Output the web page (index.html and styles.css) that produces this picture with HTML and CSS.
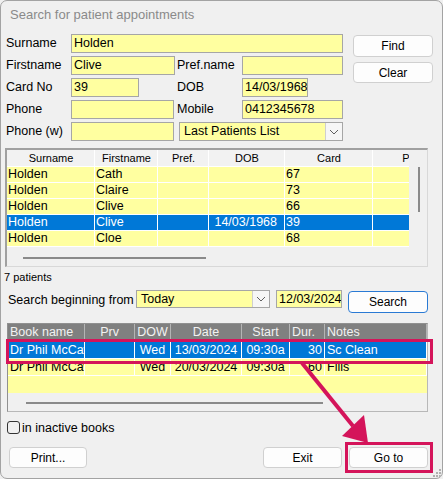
FILE: index.html
```html
<!DOCTYPE html>
<html>
<head>
<meta charset="utf-8">
<link rel="stylesheet" href="styles.css">
</head>
<body>
<div class="window">
  <div class="title">Search for patient appointments</div>

  <div class="form">
    <div class="fields">
      <span class="lbl">Surname</span><div class="field span3">Holden</div>
      <span class="lbl">Firstname</span><div class="field w104">Clive</div><span class="lbl">Pref.name</span><div class="field"></div>
      <span class="lbl">Card No</span><div class="field w68">39</div><span class="lbl">DOB</span><div class="field w66">14/03/1968</div>
      <span class="lbl">Phone</span><div class="field w103"></div><span class="lbl">Mobile</span><div class="field">0412345678</div>
      <span class="lbl">Phone (w)</span><div class="field w103"></div>
      <div class="field combo span2 shift">Last Patients List<span class="drop"><svg width="10" height="6" viewBox="0 0 10 6"><polyline points="1,1 5,5 9,1" fill="none" stroke="#606060" stroke-width="1"/></svg></span></div>
    </div>
    <div class="side-btns">
      <button class="btn find">Find</button>
      <button class="btn clear">Clear</button>
    </div>
  </div>

  <div class="plist">
    <div class="pgrid">
      <div class="prow phead"><span>Surname</span><span>Firstname</span><span>Pref.</span><span>DOB</span><span>Card</span><span>P</span></div>
      <div class="prow"><span>Holden</span><span>Cath</span><span></span><span class="r"></span><span>67</span><span></span></div>
      <div class="prow"><span>Holden</span><span>Claire</span><span></span><span class="r"></span><span>73</span><span></span></div>
      <div class="prow"><span>Holden</span><span>Clive</span><span></span><span class="r"></span><span>66</span><span></span></div>
      <div class="prow sel"><span>Holden</span><span>Clive</span><span></span><span class="r">14/03/1968</span><span>39</span><span></span></div>
      <div class="prow"><span>Holden</span><span>Cloe</span><span></span><span class="r"></span><span>68</span><span></span></div>
      <div class="hscroll"><div class="hthumb"></div></div>
    </div>
    <div class="vscroll"><div class="vthumb"></div></div>
  </div>

  <div class="count">7 patients</div>

  <div class="search-row">
    <span class="slabel">Search beginning from</span>
    <div class="field combo today">Today<span class="drop"><svg width="10" height="6" viewBox="0 0 10 6"><polyline points="1,1 5,5 9,1" fill="none" stroke="#606060" stroke-width="1"/></svg></span></div>
    <div class="field sdate">12/03/2024</div>
    <button class="btn search">Search</button>
  </div>

  <div class="appts">
    <div class="arow ahead"><span class="l">Book name</span><span>Prv</span><span>DOW</span><span>Date</span><span>Start</span><span class="l">Dur.</span><span class="l">Notes</span></div>
    <div class="arow sel"><span class="l">Dr Phil McCaw</span><span></span><span>Wed</span><span>13/03/2024</span><span>09:30a</span><span class="r">30</span><span class="l">Sc Clean</span></div>
    <div class="arow"><span class="l">Dr Phil McCaw</span><span></span><span>Wed</span><span>20/03/2024</span><span>09:30a</span><span class="r">60</span><span class="l">Fills</span></div>
    <div class="arow empty"></div>
    <div class="ascroll"><div class="athumb"></div></div>
  </div>

  <label class="check"><span class="box"></span>in inactive books</label>

  <div class="bottom">
    <button class="btn print">Print...</button>
    <button class="btn exit">Exit</button>
    <button class="btn goto">Go to</button>
  </div>

  <svg class="overlay" width="443" height="479" viewBox="0 0 443 479">
    <rect x="7.5" y="340.5" width="424" height="22" fill="none" stroke="#d4145a" stroke-width="3"/>
    <rect x="346.5" y="443.5" width="85" height="28" fill="none" stroke="#d4145a" stroke-width="3"/>
    <line x1="302" y1="363" x2="353" y2="426" stroke="#d4145a" stroke-width="4"/>
    <polygon points="342,436 364,415 368,443" fill="#d4145a"/>
    <g fill="#b0b0b0">
      <rect x="439" y="469" width="2" height="2"/>
      <rect x="436" y="472" width="2" height="2"/>
      <rect x="439" y="472" width="2" height="2"/>
      <rect x="433" y="475" width="2" height="2"/>
      <rect x="436" y="475" width="2" height="2"/>
      <rect x="439" y="475" width="2" height="2"/>
    </g>
  </svg>
</div>
</body>
</html>
```

FILE: styles.css
```css
* { box-sizing: border-box; }

html, body {
  margin: 0;
  padding: 0;
  background: #f0f0f0;
}

body {
  font-family: "Liberation Sans", Arial, sans-serif;
  font-size: 12.5px;
  color: #000;
}

.window {
  position: relative;
  width: 443px;
  height: 479px;
  border: 1px solid #a3a3a3;
  border-radius: 7px;
  background: #f0f0f0;
  overflow: hidden;
}

.title {
  height: 32px;
  padding: 6px 0 0 9px;
  line-height: 16px;
  font-size: 13px;
  color: #8a8a8a;
}

/* ---------- top form ---------- */
.form {
  display: flex;
  margin-left: 5px;
}

.fields {
  display: grid;
  grid-template-columns: 65px 106px 65px 101px;
  grid-template-rows: repeat(5, 19px);
  row-gap: 3px;
  padding-top: 1px;
  align-items: center;
}

.lbl {
  line-height: 19px;
  white-space: nowrap;
}

.field {
  height: 19px;
  background: #ffffa0;
  border: 1px solid #a6a6a6;
  padding-left: 2px;
  line-height: 17px;
  font-size: 12.5px;
  white-space: nowrap;
  overflow: hidden;
}

.span3 { grid-column: 2 / span 3; }
.span2 { grid-column: 3 / span 2; }
.w104 { width: 104px; }
.w68 { width: 68px; }
.w66 { width: 66px; }
.w103 { width: 103px; }
.shift { margin-left: 2px; }

.combo {
  display: flex;
  align-items: center;
  padding-left: 4px;
}

.combo .drop {
  margin-left: auto;
  width: 17px;
  height: 17px;
  background: #f6f6f6;
  border-left: 1px solid #cfcfcf;
  display: flex;
  align-items: center;
  justify-content: center;
}

.side-btns {
  display: flex;
  flex-direction: column;
  margin-left: 10px;
  width: 80px;
}

.btn {
  font-family: "Liberation Sans", Arial, sans-serif;
  font-size: 12px;
  color: #000;
  background: #fdfdfd;
  border: 1px solid #d0d0d0;
  border-radius: 4px;
  padding: 0;
  margin: 0;
}

.find { height: 22px; margin-top: 2px; }
.clear { height: 21px; margin-top: 5px; }

/* ---------- patient list ---------- */
.plist {
  display: flex;
  margin: 7px 0 0 4px;
  width: 423px;
  height: 119px;
  border-top: 2px solid #a0a0a0;
  border-left: 2px solid #a0a0a0;
  border-right: 1px solid #d8d8d8;
  border-bottom: 1px solid #d8d8d8;
}

.pgrid {
  width: 402px;
  overflow: hidden;
}

.prow {
  display: grid;
  grid-template-columns: 88px 63px 51px 76px 88px 66px;
  height: 16px;
  width: 432px;
}

.prow span {
  background: #ffffa0;
  border-right: 1px solid #fff;
  border-bottom: 1px solid #fff;
  padding-left: 1px;
  line-height: 15px;
  font-size: 12.5px;
  white-space: nowrap;
  overflow: hidden;
}

.prow span.r {
  text-align: right;
  padding-right: 7px;
}

.prow.phead {
  height: 17px;
}

.prow.phead span {
  background: #f2f2f2;
  text-align: center;
  font-size: 11px;
  line-height: 16px;
  border-right: 1px solid #fff;
  border-bottom: 1px solid #fff;
}

.prow.sel span {
  background: #0078d7;
  color: #fff;
}

.hscroll {
  height: 19px;
  padding: 10px 0 0 16px;
}

.hthumb {
  width: 183px;
  height: 2px;
  background: #8a8a8a;
}

.vscroll {
  width: 18px;
  padding: 17px 0 0 9px;
}

.vthumb {
  width: 2px;
  height: 45px;
  background: #8a8a8a;
}

.count {
  margin: 3px 0 0 3px;
  line-height: 14px;
  font-size: 11px;
}

/* ---------- search row ---------- */
.search-row {
  display: flex;
  align-items: flex-start;
  margin: 6px 0 0 7px;
  height: 23px;
}

.slabel {
  width: 128px;
  line-height: 21px;
  font-size: 12.5px;
  white-space: nowrap;
}

.today {
  width: 134px;
  height: 18px;
}

.sdate {
  width: 66px;
  height: 18px;
  margin-left: 6px;
  padding-left: 2px;
}

.search {
  width: 80px;
  height: 22px;
  margin: 1px 0 0 6px;
  border-color: #2a7ad4;
}

/* ---------- appointments ---------- */
.appts {
  margin: 10px 0 0 6px;
  width: 421px;
  height: 89px;
  border: 1px solid #b8b8b8;
  border-top-color: #909090;
  border-left-color: #909090;
  overflow: hidden;
}

.arow {
  display: grid;
  grid-template-columns: 77px 50px 36px 71px 48px 35px 102px;
  height: 17px;
}

.arow span {
  background: #ffffa0;
  border-right: 1px solid #fff;
  border-bottom: 1px solid #fff;
  text-align: center;
  line-height: 16px;
  font-size: 12.5px;
  white-space: nowrap;
  overflow: hidden;
}

.arow span.l { text-align: left; padding-left: 2px; }
.arow span.r { text-align: right; padding-right: 2px; }

.arow.ahead {
  height: 18px;
}

.arow.ahead span {
  background: #808080;
  color: #f2f2f2;
  border-right: 1px solid #b4b4b4;
  border-bottom: 1px solid #808080;
  line-height: 17px;
}

.arow.sel span {
  background: #0078d7;
  color: #fff;
}

.arow.empty {
  display: block;
  background: #ffffa0;
}

.ascroll {
  padding: 9px 0 0 18px;
}

.athumb {
  width: 297px;
  height: 2px;
  background: #8a8a8a;
}

/* ---------- checkbox ---------- */
.check {
  display: flex;
  align-items: center;
  margin: 9px 0 0 6px;
  height: 13px;
  font-size: 12.5px;
}

.check .box {
  width: 13px;
  height: 13px;
  border: 1px solid #333;
  border-radius: 3px;
  margin-right: 2px;
}

/* ---------- bottom buttons ---------- */
.bottom {
  display: flex;
  margin-top: 13px;
  padding: 0 14px 0 8px;
  height: 21px;
}

.bottom .btn {
  height: 21px;
  width: 79px;
}

.print { width: 78px !important; }
.exit { margin-left: auto; }
.goto { margin-left: 7px; }

.overlay {
  position: absolute;
  left: -1px;
  top: -1px;
  pointer-events: none;
}
```
